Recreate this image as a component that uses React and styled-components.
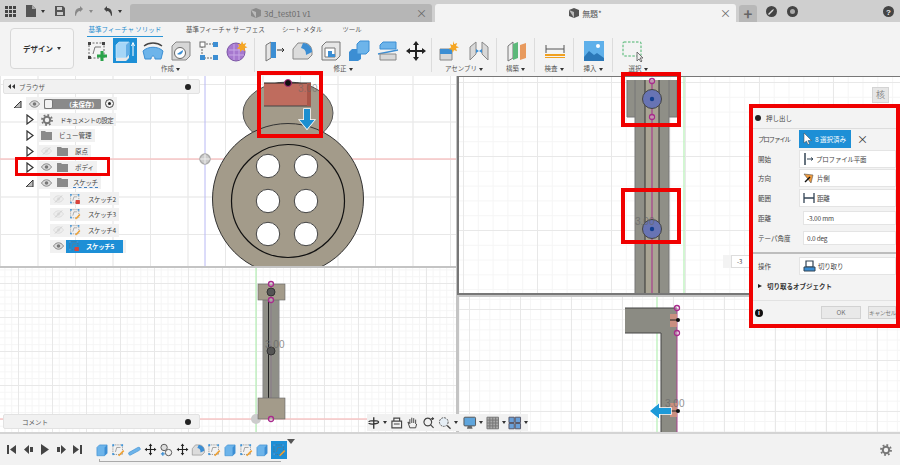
import React from 'react'
import styled, { createGlobalStyle, css } from 'styled-components'

const GlobalStyle = createGlobalStyle`
  html, body { margin: 0; padding: 0; background: #f2f2f2; }
  body { font-family: "Noto Sans CJK JP", "Noto Sans", sans-serif; color: #444; overflow: hidden; }
  * { box-sizing: border-box; }
`

const Page = styled.div`
  position: relative;
  width: 900px;
  height: 465px;
  overflow: hidden;
  display: flex;
  flex-direction: column;
`

/* ---------- tab bar ---------- */
const TabBar = styled.div`
  height: 22px;
  background: #cfcfcf;
  display: flex;
  align-items: flex-end;
`
const QuickTools = styled.div`
  width: 130px;
  height: 22px;
  display: flex;
  align-items: center;
  padding-left: 5px;
  gap: 3px;
  flex: none;
`
const Tab = styled.div`
  position: relative;
  width: ${(p) => p.$w}px;
  margin-right: 3px;
  height: 18px;
  border-radius: 3px 3px 0 0;
  background: ${(p) => (p.$active ? '#f3f3f3' : '#b6b6b6')};
  color: ${(p) => (p.$active ? '#555' : '#6c6c6c')};
  font-size: 8px;
  display: flex;
  align-items: center;
  justify-content: center;
  gap: 3px;
  flex: none;
`
const TabClose = styled.span`
  position: absolute;
  right: 5px;
  top: 3px;
  font-size: 11px;
  line-height: 12px;
  color: #666;
`
const PlusTab = styled.div`
  width: 18px;
  height: 17px;
  border-radius: 3px 3px 0 0;
  background: #b8b8b8;
  color: #666;
  font-size: 15px;
  line-height: 17px;
  text-align: center;
  font-weight: 700;
  flex: none;
`
const TabRight = styled.div`
  flex: 1;
  height: 22px;
  display: flex;
  align-items: center;
  padding: 0 6px 0 9px;
  gap: 10px;
`
const Spacer = styled.div`
  flex: 1;
`

/* ---------- ribbon ---------- */
const Ribbon = styled.div`
  height: 54px;
  background: #f3f3f3;
  display: flex;
  padding-left: 10px;
`
const DesignButton = styled.div`
  width: 64px;
  height: 41px;
  margin-top: 6px;
  margin-right: 13px;
  border: 1px solid #d8d8d8;
  border-radius: 4px;
  background: #f6f6f6;
  font-size: 7.5px;
  font-weight: 700;
  color: #333;
  display: flex;
  align-items: center;
  justify-content: center;
  flex: none;
`
const RibbonBody = styled.div`
  position: relative;
  flex: 1;
  display: flex;
  padding-top: 15px;
`
const RibbonTab = styled.div`
  position: absolute;
  top: 2px;
  left: ${(p) => p.$x}px;
  width: ${(p) => p.$w}px;
  height: 13px;
  text-align: center;
  font-size: 6.5px;
  line-height: 11px;
  white-space: nowrap;
  color: ${(p) => (p.$active ? '#2a8fd0' : '#555')};
  border-bottom: ${(p) => (p.$active ? '1px solid #2a94d6' : 'none')};
`
const Group = styled.div`
  display: flex;
  flex-direction: column;
  align-items: center;
  width: ${(p) => p.$w}px;
  height: 34px;
  margin-top: 1px;
  border-right: ${(p) => (p.$last ? 'none' : '1px solid #dcdcdc')};
  flex: none;
`
const IconRow = styled.div`
  display: flex;
  gap: ${(p) => p.$gap ?? 6}px;
  height: 26px;
  align-items: center;
  transform: translateX(${(p) => p.$shift ?? 0}px);
`
const IconCell = styled.div`
  width: 24px;
  height: 25px;
  display: flex;
  align-items: center;
  justify-content: center;
  background: ${(p) => (p.$on ? '#1d8fd6' : 'transparent')};
  flex: none;
`
const GroupLabel = styled.div`
  font-size: 6.5px;
  line-height: 11px;
  color: #555;
  white-space: nowrap;
`

/* ---------- viewports ---------- */
const Views = styled.div`
  position: relative;
  height: 356px;
  display: flex;
  background: #fff;
`
const Column = styled.div`
  display: flex;
  flex-direction: column;
  width: ${(p) => p.$w}px;
  flex: none;
`
const gridLines = (p) => css`
  background-color: #fff;
  background-image:
    linear-gradient(#e8e8e8 1px, transparent 1px),
    linear-gradient(90deg, #e8e8e8 1px, transparent 1px),
    linear-gradient(#f5f5f5 1px, transparent 1px),
    linear-gradient(90deg, #f5f5f5 1px, transparent 1px);
  background-size:
    ${p.$major}px ${p.$major}px,
    ${p.$major}px ${p.$major}px,
    ${p.$minor}px ${p.$minor}px,
    ${p.$minor}px ${p.$minor}px;
  background-position: ${p.$ox}px ${p.$oy}px;
`
const Pane = styled.div`
  ${gridLines}
  height: ${(p) => p.$h}px;
  border-top: ${(p) => (p.$bt ? `${p.$btw ?? 1}px solid ${p.$bt}` : 'none')};
  border-left: ${(p) => (p.$bl ? `2px solid ${p.$bl}` : 'none')};
  border-bottom: ${(p) => (p.$bb ? `2px solid ${p.$bb}` : 'none')};
  overflow: hidden;
  flex: none;
`
const Drawing = styled.svg`
  display: block;
  width: 100%;
  height: 100%;
`
const DimText = styled.text`
  font-family: "Liberation Sans", sans-serif;
  font-size: 10px;
  fill: #666;
  opacity: ${(p) => p.$fade ?? 1};
`
const Splitter = styled.div`
  width: 1px;
  background: #c4c4c4;
  flex: none;
`

/* ---------- browser / comments ---------- */
const PanelHeader = styled.div`
  position: absolute;
  left: 3px;
  top: ${(p) => p.$y}px;
  width: 197px;
  height: 15px;
  background: #f1f1f1;
  border: 1px solid #e2e2e2;
  border-radius: 2px;
  display: flex;
  align-items: center;
  padding: 0 8px 0 4px;
  font-size: 6.5px;
  color: #555;
  gap: 4px;
`
const PanelDot = styled.span`
  margin-left: auto;
  width: 6px;
  height: 6px;
  border-radius: 50%;
  background: #222;
`
const Tree = styled.div`
  position: absolute;
  left: 0;
  top: 20px;
  width: 200px;
  display: flex;
  flex-direction: column;
  font-size: 6.5px;
  color: #444;
`
const TreeRow = styled.div`
  height: 15.8px;
  display: flex;
  align-items: center;
  padding-left: ${(p) => p.$indent}px;
`
const Toggle = styled.div`
  width: 12px;
  height: 12px;
  display: flex;
  align-items: center;
  justify-content: flex-start;
  flex: none;
`
const Pill = styled.div`
  height: 13px;
  display: flex;
  align-items: center;
  background: #f1f1f1;
  padding: 0 3px;
  gap: ${(p) => p.$gap ?? 3}px;
  margin-left: ${(p) => p.$ml ?? 0}px;
`
const Name = styled.span`
  margin-left: ${(p) => p.$ml ?? 0}px;
  white-space: nowrap;
  letter-spacing: ${(p) => p.$ls ?? 0}px;
  border-bottom: ${(p) => (p.$dashed ? '1px dashed #3f7fc4' : 'none')};
`
const RootChip = styled.div`
  width: 57px;
  height: 10px;
  background: #8a8a8a;
  color: #fff;
  font-size: 6.5px;
  font-weight: 700;
  line-height: 10px;
  display: flex;
  align-items: center;
  justify-content: space-between;
  padding-right: 3px;
  border-radius: 1px;
`
const RootThumb = styled.span`
  width: 9px;
  height: 10px;
  background: #f2f2f2;
  border: 1px solid #777;
  border-radius: 2px;
`
const Selected = styled.div`
  width: 57px;
  height: 13px;
  background: #1d8fd6;
  color: #fff;
  font-weight: 700;
  display: flex;
  align-items: center;
  padding-left: 2px;
  gap: 6px;
  margin-left: -1px;
`

/* ---------- nav bar ---------- */
const NavBar = styled.div`
  position: absolute;
  left: 367px;
  top: 338px;
  width: 161px;
  height: 17px;
  background: #f1f1f1;
  display: flex;
  align-items: center;
  gap: 2.5px;
`
const Caret = styled.span`
  width: 0;
  height: 0;
  border-left: 2px solid transparent;
  border-right: 2px solid transparent;
  border-top: 3px solid ${(p) => p.$c ?? '#333'};
  display: inline-block;
  margin-left: ${(p) => p.$ml ?? 2}px;
  margin-right: ${(p) => p.$mr ?? 0}px;
  vertical-align: middle;
  flex: none;
`

/* ---------- red callouts ---------- */
const Callout = styled.div`
  position: absolute;
  left: ${(p) => p.$x}px;
  top: ${(p) => p.$y}px;
  width: ${(p) => p.$w}px;
  height: ${(p) => p.$h}px;
  border: ${(p) => p.$b ?? 4}px solid #f00000;
  pointer-events: none;
`
const ViewCube = styled.div`
  position: absolute;
  left: 872px;
  top: 11px;
  width: 17px;
  height: 16px;
  background: #e6e6e6;
  border: 1px solid #d4d4d4;
  font-size: 9px;
  color: #888;
  text-align: center;
  line-height: 14px;
`
const GhostInput = styled.div`
  position: absolute;
  left: 723px;
  top: 179px;
  width: 30px;
  height: 13px;
  background: #f3f3f3;
  padding-left: 8px;
`
const GhostField = styled.div`
  width: 22px;
  height: 13px;
  background: #fff;
  border: 1px solid #ddd;
  font-size: 6px;
  line-height: 11px;
  padding-left: 5px;
`

/* ---------- extrude dialog ---------- */
const Dialog = styled.div`
  position: absolute;
  left: 753px;
  top: 32px;
  width: 143px;
  height: 216px;
  background: #f3f3f3;
  font-size: 6.5px;
  color: #444;
  overflow: hidden;
  display: flex;
  flex-direction: column;
`
const DialogTitle = styled.div`
  height: 21px;
  padding-left: 2px;
  display: flex;
  align-items: center;
  gap: 5px;
  border-bottom: 1px solid #ddd;
`
const TitleDot = styled.span`
  width: 6px;
  height: 6px;
  border-radius: 50%;
  background: #222;
`
const DialogRow = styled.div`
  height: 19.8px;
  display: flex;
  align-items: center;
  padding-left: 5px;
  flex: none;
`
const DialogLabel = styled.div`
  width: 41px;
  flex: none;
  white-space: nowrap;
  letter-spacing: ${(p) => p.$ls ?? 0}px;
`
const ProfileButton = styled.div`
  width: 52px;
  height: 18px;
  background: #1d8fd6;
  color: #fff;
  display: flex;
  align-items: center;
  padding-left: 4px;
  gap: 3px;
`
const ClearX = styled.span`
  margin-left: 6px;
  font-size: 11px;
  color: #333;
`
const Field = styled.div`
  width: 110px;
  height: ${(p) => (p.$plain ? 14 : 18)}px;
  margin-left: ${(p) => (p.$plain ? 4 : 0)}px;
  background: #fff;
  border: 1px solid #e4e4e4;
  display: flex;
  align-items: center;
  padding-left: 3px;
  gap: 2px;
  white-space: nowrap;
  letter-spacing: -0.2px;
`
const DialogRule = styled.div`
  height: 2px;
  background: #bdbdbd;
  margin: 4px 0 2px;
  flex: none;
`
const Section = styled.div`
  height: 20px;
  padding-left: 5px;
  display: flex;
  align-items: center;
  gap: 5px;
  font-weight: 700;
  color: #333;
`
const SectionArrow = styled.span`
  width: 0;
  height: 0;
  border-top: 2.5px solid transparent;
  border-bottom: 2.5px solid transparent;
  border-left: 4px solid #222;
`
const DialogFooter = styled.div`
  margin-top: auto;
  height: 24px;
  border-top: 1px solid #e2e2e2;
  display: flex;
  align-items: center;
  padding-left: 2px;
`
const InfoDot = styled.span`
  width: 8px;
  height: 8px;
  border-radius: 50%;
  background: #111;
  color: #fff;
  font-size: 6px;
  line-height: 8px;
  text-align: center;
  font-weight: 700;
  margin-right: 58px;
  flex: none;
`
const FootButton = styled.div`
  width: ${(p) => p.$w}px;
  height: 13px;
  background: #e9e9e9;
  border: 1px solid #d2d2d2;
  color: #777;
  font-size: ${(p) => p.$fs ?? 6.5}px;
  letter-spacing: ${(p) => p.$ls ?? 0}px;
  text-align: center;
  line-height: 11px;
  margin-right: 7px;
  white-space: nowrap;
  flex: none;
`

/* ---------- timeline ---------- */
const Timeline = styled.div`
  height: 33px;
  background: #f2f2f2;
  border-top: 2px solid #d4d4d4;
  display: flex;
  align-items: center;
  padding-left: 6px;
  padding-right: 8px;
`
const Player = styled.div`
  display: flex;
  gap: 5.5px;
  width: 89px;
  flex: none;
`
const Steps = styled.div`
  position: relative;
  display: flex;
  gap: 2px;
  height: 24px;
  align-items: center;
`
const Step = styled.div`
  width: 14px;
  height: 16px;
  display: flex;
  align-items: center;
  justify-content: center;
  flex: none;
`
const ActiveStep = styled.div`
  width: 16px;
  height: 18px;
  background: #1d8fd6;
  display: flex;
  align-items: center;
  justify-content: center;
  flex: none;
`
const Ruler = styled.div`
  position: absolute;
  left: 4px;
  right: 6px;
  bottom: 0;
  height: 3px;
  border-bottom: 1px solid #aaa;
  border-left: 1px solid #aaa;
`
const Marker = styled.div`
  position: absolute;
  right: -8px;
  top: 1px;
  width: 0;
  height: 0;
  border-left: 4px solid transparent;
  border-right: 4px solid transparent;
  border-top: 5px solid #555;
`

/* ---------- icons ---------- */
const Svg = ({ s = 22, children }) => (
  <svg width={s} height={s} viewBox="0 0 22 22" fill="none">
    {children}
  </svg>
)
const B = '#6db4ea'
const D = '#3c8ed3'

const Cube = ({ s = 22 }) => (
  <Svg s={s}>
    <path d="M3 7l4-4h12v13l-4 4H3z" fill={B} stroke={D} />
    <path d="M15 7l4-4v13l-4 4z" fill={D} />
  </Svg>
)
const ExtrudeIcon = () => (
  <Svg>
    <path d="M2 5l3-3h10v13l-3 3H2z" fill="#a6d6f7" stroke="#d8eefc" strokeWidth=".6" />
    <path d="M12 5l3-3v13l-3 3z" fill="#63aee6" />
    <path d="M2 18h10l3-3v3l-3 3H2z" fill="#e8e8e8" />
    <path d="M19 16V3M17.500 6L19 2.500 20.500 6" stroke="#fff" />
  </Svg>
)
const SketchIcon = ({ s = 22, plus, pen, lock }) => (
  <Svg s={s}>
    <rect x="3" y="3" width="15" height="15" stroke="#666" strokeDasharray="2 1.500" />
    <path d="M9 7h6M7 14l2-7" stroke="#777" />
    {[[2, 2], [16, 2], [2, 16]].map(([x, y]) => (
      <rect key={`${x}${y}`} x={x} y={y} width="3" height="3" fill={plus ? '#444' : '#3f96dc'} />
    ))}
    {plus && <path d="M16 11v10M11 16h10" stroke="#2aa34a" strokeWidth="3" />}
    {pen && <path d="M12 20l8-8" stroke="#f0a030" strokeWidth="2.500" />}
    {lock && <rect x="12" y="13" width="8" height="7" rx="1" fill="#d9453c" />}
  </Svg>
)
const RevolveIcon = ({ s = 22 }) => (
  <Svg s={s}>
    <path d="M1 11c5-5 15-5 20 0l-2 8h-6c0-4-4-4-4 0H3z" fill={B} stroke={D} />
    <path d="M2 6c5-4 13-4 18 0" stroke="#444" strokeWidth="1.300" />
  </Svg>
)
const PipeIcon = ({ s = 22 }) => (
  <Svg s={s}>
    <path d="M3 15L17 7a2.500 2.500 0 0 1 2.500 4.500L5.500 19A2.500 2.500 0 0 1 3 15z" fill={B} stroke={D} />
  </Svg>
)
const HoleIcon = () => (
  <Svg>
    <path d="M2 6l4-4h14v14l-4 4H2z" fill="#d6d6d6" stroke="#888" />
    <circle cx="10" cy="13" r="5.500" fill="#fff" stroke="#666" />
    <path d="M7 14l6-4a4 4 0 0 1-6 4z" fill={D} />
  </Svg>
)
const PatternIcon = () => (
  <Svg>
    <path d="M5 4h12M4 6v11M6 18h11" stroke="#666" strokeDasharray="2 1" />
    {[[2, 2], [15, 2], [2, 15], [15, 15]].map(([x, y], i) => (
      <rect key={x + y + i} x={x} y={y} width="5" height="5" fill={i === 0 ? '#fff' : D} stroke={i === 0 ? '#666' : 'none'} />
    ))}
  </Svg>
)
const JointStep = ({ s = 22 }) => (
  <Svg s={s}>
    <circle cx="8" cy="7" r="5" fill="#ddd" stroke="#555" strokeWidth="1.500" />
    <circle cx="15" cy="15" r="5" fill="#f2f2f2" stroke="#555" strokeWidth="1.500" />
    <path d="M6 14v6M3 17h6" stroke={D} strokeWidth="2" />
  </Svg>
)
const FormIcon = () => (
  <Svg>
    <circle cx="10" cy="12" r="9" fill="#a678cf" stroke="#7d57a6" />
    <path d="M3 10h15M3 15h15M8 4v16M13 4v16" stroke="#c8a8e6" />
    <path d="M16 1l1.300 3 3-1-1.500 3 2.700 1.300-3 1 .8 3-3-1.600-2 2.300-.5-3-3-.4 2.500-2-1.500-2.600 3 .6z" fill="#f5a623" />
  </Svg>
)
const PressPullIcon = () => (
  <Svg>
    <path d="M3 5l5-3v16l-5 3z" fill="#e5e5e5" stroke="#777" />
    <path d="M8 2h5v16H8z" fill={D} />
    <path d="M14 10h7M19 8l2 2-2 2" stroke="#333" />
  </Svg>
)
const FilletIcon = ({ s = 22 }) => (
  <Svg s={s}>
    <path d="M2 19V9l5-6h6c5 0 8 4 8 9v3l-4 4z" fill="#dcdcdc" stroke="#888" />
    <path d="M12 3c5 0 9 4 9 9l-6 3c0-4-1-6-5-7z" fill={D} />
  </Svg>
)
const ShellIcon = () => (
  <Svg>
    <path d="M2 6l4-4h14v14l-4 4H2z" fill="#e6e6e6" stroke="#777" />
    <path d="M5 8h10v9H5z" fill="#fff" stroke="#777" />
    <path d="M8 11h4v3h3v3H8z" fill={D} />
  </Svg>
)
const CombineIcon = () => (
  <Svg>
    <path d="M1 12l3-3h9v10l-3 2H1z" fill={D} />
    <path d="M9 4l3-3h9v10l-3 3H9z" fill={B} stroke={D} />
  </Svg>
)
const SplitIcon = () => (
  <Svg>
    <path d="M3 5l3-3h13v7H3z" fill={B} stroke={D} />
    <path d="M1 14l20-4" stroke={D} strokeWidth="1.500" />
    <path d="M3 14h16v6H3z" fill="#d8d8d8" stroke="#888" />
  </Svg>
)
const MoveIcon = ({ s = 22 }) => (
  <Svg s={s}>
    <path d="M11 1l3 4h-2v5h5V8l4 3-4 3v-2h-5v5h2l-3 4-3-4h2v-5H5v2l-4-3 4-3v2h5V5H8z" fill="#222" />
  </Svg>
)
const AssemblyIcon = () => (
  <Svg>
    <path d="M2 9h12v11H2z" fill="#d8d8d8" stroke="#888" />
    <path d="M2 9h12v5H2z" fill={D} />
    <path d="M15 1l1.200 3 3-1-1.200 3 3 1.200-3 1 1 3-3-1.200-1.300 2.800-1-3-3-.8 2.500-1.800-1.200-3 3 .8z" fill="#f5a623" />
  </Svg>
)
const JointIcon = () => (
  <Svg>
    <path d="M2 7l6-5v12l-6 6zM20 7l-6-5v12l6 6z" fill="#d8d8d8" stroke="#888" />
    <path d="M8 9l3 2-3 2zM14 9l-3 2 3 2z" fill={D} />
  </Svg>
)
const PlaneIcon = () => (
  <Svg>
    <path d="M2 6l5-4v16l-5 3z" fill="#eee" stroke="#777" />
    <path d="M7 4l5-2v16l-5 2z" fill="#5cb87a" />
    <path d="M14 5l6-2v15l-6 2z" fill="#e89a5e" />
  </Svg>
)
const MeasureIcon = () => (
  <Svg>
    <path d="M2 5v8M20 5v8M2 9h18" stroke="#555" />
    <rect x="1" y="14" width="20" height="2" fill="#f0a020" />
    <rect x="1" y="17" width="20" height="1" fill="#f0a020" />
  </Svg>
)
const PictureIcon = () => (
  <Svg>
    <rect x="1" y="1" width="20" height="20" fill="#5fb0ea" />
    <circle cx="15" cy="6" r="2" fill="#fff" />
    <path d="M1 17l5-6 5 4 3-2 7 5v3H1z" fill="#2b78b8" />
  </Svg>
)
const SelectIcon = () => (
  <Svg>
    <rect x="1" y="2" width="18" height="14" rx="1" stroke="#47b36b" strokeDasharray="2.500 1.500" />
    <path d="M15 12v9l2-2 2 3 1-1-2-3h3z" fill="#eee" stroke="#555" strokeWidth=".8" />
  </Svg>
)
const Grid9 = () => (
  <svg width="11" height="11" viewBox="0 0 11 11">
    {[0, 4, 8].flatMap((x) =>
      [0, 4, 8].map((y) => <rect key={`${x}-${y}`} x={x} y={y} width="3" height="3" fill="#444" />)
    )}
  </svg>
)
const FileIcon = () => (
  <svg width="10" height="12" viewBox="0 0 10 12">
    <path d="M0 0h6l4 4v8H0z" fill="#555" />
    <path d="M6 0v4h4" fill="#aaa" />
  </svg>
)
const SaveIcon = () => (
  <svg width="10" height="10" viewBox="0 0 10 10">
    <path d="M0 0h8l2 2v8H0z" fill="#555" />
    <rect x="2" y="1" width="5" height="3" fill="#ccc" />
    <rect x="2" y="6" width="6" height="3" fill="#ccc" />
  </svg>
)
const Turn = ({ flip, c }) => (
  <svg width="10" height="10" viewBox="0 0 10 10" fill="none" style={flip ? { transform: 'scaleX(-1)' } : undefined}>
    <path d="M1 3l3-3v2c3 0 5 2 5 6 0 1 0 2-1 2 0-3-2-5-4-5v1z" fill={c} />
  </svg>
)
const MiniCube = ({ c = '#555' }) => (
  <svg width="10" height="10" viewBox="0 0 10 10">
    <path d="M5 0l5 2v6l-5 2-5-2V2z" fill={c} />
    <path d="M0 2l5 2v6" fill="#bbb" />
  </svg>
)
const RoundIcon = ({ ch }) => (
  <svg width="11" height="11" viewBox="0 0 11 11">
    <circle cx="5.500" cy="5.500" r="5.500" fill="#444" />
    {ch === 'clock' && <circle cx="5.500" cy="5.500" r="2.500" fill="#aaa" />}
    {ch === 'wrench' && <path d="M2 8l4-4 2-1-1 2-4 4z" fill="#ddd" />}
    {ch === '?' && <text x="5.500" y="8.500" fontSize="8" fontWeight="700" textAnchor="middle" fill="#eee" fontFamily="Liberation Sans, sans-serif">?</text>}
  </svg>
)
const Eye = ({ off }) => (
  <svg width="11" height="8" viewBox="0 0 11 8" fill="none">
    <path d="M.5 4C2 1.500 4 .8 5.500.8S9 1.500 10.500 4C9 6.500 7 7.200 5.500 7.200S2 6.500.5 4z" fill={off ? '#eee' : '#ddd'} stroke={off ? '#ddd' : '#888'} />
    <circle cx="5.500" cy="4" r="1.800" fill={off ? '#ddd' : '#777'} />
    {off && <path d="M2 7.500l7-7" stroke="#ccc" />}
  </svg>
)
const Folder = () => (
  <svg width="11" height="9" viewBox="0 0 11 9">
    <path d="M0 0h4l1 1h6v8H0z" fill="#8a8a8a" />
  </svg>
)
const Gear = () => (
  <svg width="12" height="12" viewBox="0 0 12 12" fill="none">
    <circle cx="6" cy="6" r="3.200" stroke="#777" strokeWidth="2" />
    <circle cx="6" cy="6" r="5" stroke="#777" strokeWidth="1.800" strokeDasharray="1.800 2.100" />
  </svg>
)
const TriOpen = () => (
  <svg width="8" height="8" viewBox="0 0 8 8">
    <path d="M0 8L7 1v7z" fill="#bbb" stroke="#333" strokeWidth="1" />
  </svg>
)
const TriClosed = () => (
  <svg width="8" height="11" viewBox="0 0 8 11">
    <path d="M1 1l6 4.500L1 10z" fill="#fff" stroke="#333" strokeWidth="1.200" />
  </svg>
)
const Radio = () => (
  <svg width="9" height="9" viewBox="0 0 9 9" fill="none">
    <circle cx="4.500" cy="4.500" r="4" stroke="#444" />
    <circle cx="4.500" cy="4.500" r="1.500" fill="#222" />
  </svg>
)
const Collapse = () => (
  <svg width="7" height="5" viewBox="0 0 7 5">
    <path d="M3 0v5L0 2.500zM7 0v5L4 2.500z" fill="#333" />
  </svg>
)
const Transport = ({ d }) => (
  <svg width="11" height="11" viewBox="0 0 11 11">
    <path d={d} fill="#444" />
  </svg>
)
const NavIcon = ({ kind }) => (
  <svg width="14" height="14" viewBox="0 0 14 14" fill="none">
    {kind === 'orbit' && <path d="M7 1v12M2 6c0-2 10-2 10 0s-10 3-10 1" stroke="#333" strokeWidth="1.400" />}
    {kind === 'look' && <path d="M2 5h10v7H2zM4 5V2h6v3M4 8h6" stroke="#444" strokeWidth="1.200" />}
    {kind === 'hand' && <path d="M4 8V3m2 4V1.500M8 7V2m2 6V3.500M4 7L2 6l2 6h6l1-4" stroke="#444" />}
    {kind === 'zoom' && <path d="M8.500 8.500L12 12M6 2a4 4 0 1 0 .01 0zM11 1v3M9.500 2.500h3" stroke="#444" strokeWidth="1.200" />}
    {kind === 'fit' && (
      <>
        <circle cx="6" cy="6" r="4.500" stroke="#555" strokeDasharray="2 1" fill="#e6eef5" />
        <path d="M9.500 9.500L13 13" stroke="#444" strokeWidth="1.400" />
      </>
    )}
    {kind === 'display' && (
      <>
        <rect x="1" y="1" width="12" height="9" rx="1" fill="#5fa5dc" stroke="#555" />
        <path d="M4 13h6L9 10H5z" fill="#666" />
      </>
    )}
    {kind === 'grid' && <path d="M1 1h12v12H1zM1 4h12M1 7h12M1 10h12M4 1v12M7 1v12M10 1v12" stroke="#777" fill="#aaa" />}
    {kind === 'views' && <path d="M1 1h5.500v5.500H1zM7.500 1H13v5.500H7.500zM1 7.500h5.500V13H1zM7.500 7.500H13V13H7.500z" fill="#6a9fd8" stroke="#556" />}
  </svg>
)
const DirIcon = () => (
  <svg width="12" height="12" viewBox="0 0 12 12">
    <path d="M1 2l9 1-2 8z" fill="#ef9a3c" stroke="#555" strokeWidth=".6" />
    <path d="M7 5l-5 5" stroke="#111" strokeWidth="1.500" />
  </svg>
)
const StartIcon = () => (
  <svg width="11" height="12" viewBox="0 0 11 12" fill="none">
    <path d="M2 0v12" stroke="#345" strokeWidth="1.500" />
    <path d="M4 6h6M8 4.500L10 6 8 7.500" stroke="#345" />
  </svg>
)
const ExtentIcon = () => (
  <svg width="12" height="12" viewBox="0 0 12 12" fill="none">
    <path d="M1 1v10M11 1v10M1 6h10" stroke="#345" strokeWidth="1.300" />
  </svg>
)
const CutIcon = () => (
  <svg width="13" height="12" viewBox="0 0 13 12" fill="none">
    <path d="M3 1h7v6H3z" fill="#fff" stroke="#345" strokeWidth="1.200" />
    <path d="M1 7h11v4H1z" fill="#3c8ed3" stroke="#345" />
  </svg>
)
const Pointer = ({ c = '#fff' }) => (
  <svg width="9" height="12" viewBox="0 0 9 12">
    <path d="M1 0v10l2.500-2 1.500 3.500 1.500-.7L5 7.500h3.500z" fill={c} stroke="#444" strokeWidth=".5" />
  </svg>
)

/* ---------- model drawings, coordinates are page pixels ---------- */
const Ring = ({ x, y }) => <circle cx={x} cy={y} r="2.500" fill="#fff" fillOpacity=".3" stroke="#a82a8c" strokeWidth="1.300" />

const TopLeftModel = () => (
  <Drawing viewBox="0 76 456 190" preserveAspectRatio="none">
    <path d="M0 159H456" stroke="#f7c6c6" strokeWidth="1.500" />
    <path d="M205 76V266" stroke="#b8b8f4" />
    <circle cx="205" cy="159" r="5" fill="#ccc" stroke="#aaa" strokeWidth="1.500" />
    <path d="M205 154v10M200 159h10" stroke="#eee" />
    <ellipse cx="288" cy="113" rx="45" ry="31" fill="#a39b8a" stroke="#555" />
    <circle cx="288" cy="199" r="75.500" fill="#a39b8a" stroke="#333" />
    <circle cx="288" cy="201" r="56.500" fill="none" stroke="#111" strokeWidth="1.200" />
    {[268, 306].flatMap((x) =>
      [166, 201, 234].map((y) => <circle key={`${x}-${y}`} cx={x} cy={y} r="11.700" fill="#fff" stroke="#444" />)
    )}
    <rect x="264" y="83" width="47" height="23" fill="#bf6c5e" />
    <path d="M264 83h47" stroke="#222" />
    <path d="M264 106h47" stroke="#444" />
    <rect x="307" y="83" width="4" height="23" fill="#a95548" />
    <circle cx="288" cy="83" r="3.500" fill="#111" stroke="#b02a7a" />
    <DimText x="298" y="92" $fade=".55">3.00</DimText>
    <path d="M304 109h6v11h4.500l-7.500 9-7.500-9h4.500z" fill="#1c8fd0" stroke="#fff" strokeWidth="1.500" paintOrder="stroke" />
  </Drawing>
)
const TopRightModel = () => (
  <Drawing viewBox="459 77 441 216" preserveAspectRatio="none">
    <path d="M684 77V295" stroke="#b5f0b5" strokeWidth="1.200" />
    <rect x="627" y="80" width="50" height="37" fill="#8f8f87" />
    <rect x="635" y="117" width="34" height="178" fill="#8f8f87" />
    <rect x="645" y="80" width="14" height="215" fill="#a9a493" />
    <path d="M635 80v215M669 80v215M627 80v37M677 80v37M627 117h8M669 117h8" stroke="#777" />
    <path d="M645 80v215M659 80v215" stroke="#333" />
    <path d="M652 80v215" stroke="#a8408e" strokeWidth="1.200" />
    {[99, 229].map((y) => (
      <g key={y}>
        <circle cx="652" cy={y} r="9.500" fill="#6874b4" stroke="#444" />
        <circle cx="652" cy={y} r="2.200" fill="#123f90" />
      </g>
    ))}
    <Ring x={652} y={81} />
    <Ring x={652} y={117} />
    <DimText x="635" y="225" $fade=".7">3.00</DimText>
  </Drawing>
)
const BottomLeftModel = () => (
  <Drawing viewBox="0 268 456 164" preserveAspectRatio="none">
    <path d="M0 419H456" stroke="#f7c6c6" strokeWidth="1.500" />
    <path d="M256 268V432" stroke="#b5f0b5" strokeWidth="1.200" />
    <circle cx="256" cy="419" r="5" fill="#ccc" />
    <rect x="263" y="298" width="16" height="100" fill="#8f8f87" />
    <path d="M263 298v100M279 298v100" stroke="#888" />
    <path d="M268.500 298v100" stroke="#222" />
    <path d="M271 284v135" stroke="#8a7a8a" />
    <rect x="258" y="284" width="27" height="16" fill="#a39b8a" stroke="#666" strokeWidth=".6" />
    <rect x="258" y="398" width="27" height="21" fill="#a39b8a" stroke="#666" strokeWidth=".6" />
    <circle cx="271" cy="292" r="4" fill="#555" stroke="#333" />
    <circle cx="271" cy="351" r="4" fill="#555" stroke="#333" />
    <Ring x={271} y={284} />
    <Ring x={271} y={300} />
    <Ring x={271} y={419} />
    <DimText x="265" y="348" $fade=".7">3.00</DimText>
  </Drawing>
)
const BottomRightModel = () => (
  <Drawing viewBox="459 297 441 135" preserveAspectRatio="none">
    <path d="M657 297V432" stroke="#b5f0b5" strokeWidth="1.200" />
    <rect x="625" y="308" width="52" height="25" fill="#8b8b83" />
    <rect x="661" y="333" width="16" height="99" fill="#8b8b83" />
    <path d="M625 308h52M625 333h36M661 333v99" stroke="#444" />
    <path d="M677 308v124" stroke="#a8408e" />
    <rect x="670" y="314" width="7" height="13" fill="#c98f80" />
    <rect x="670" y="403" width="7" height="14" fill="#c98f80" />
    <path d="M670 320h8M670 411h8" stroke="#222" />
    <circle cx="678" cy="320" r="2" fill="#111" />
    <circle cx="678" cy="411" r="2" fill="#111" />
    <Ring x={677} y={308} />
    <Ring x={677} y={333} />
    <path d="M671 408h-12v-4.500l-9 7.500 9 7.500V414h12z" fill="#1c9ad8" stroke="#fff" strokeWidth="1.500" paintOrder="stroke" />
    <DimText x="665" y="407" $fade=".7">3.00</DimText>
  </Drawing>
)

const plainRows = [
  { name: 'ドキュメントの設定', lead: <Gear />, ls: -0.6 },
  { name: 'ビュー管理', lead: <Folder /> },
]
const bodyRows = [
  { name: '原点', off: true },
  { name: 'ボディ' },
]
const sketchRows = [
  { name: 'スケッチ2', lock: true },
  { name: 'スケッチ3', pen: true },
  { name: 'スケッチ4', pen: true },
]
const stepIcons = [
  <Cube s={14} key="a" />,
  <SketchIcon s={14} pen key="b" />,
  <PipeIcon s={14} key="c" />,
  <MoveIcon s={13} key="d" />,
  <JointStep s={14} key="e" />,
  <MoveIcon s={13} key="f" />,
  <FilletIcon s={14} key="g" />,
  <SketchIcon s={14} pen key="h" />,
  <Cube s={14} key="i" />,
  <SketchIcon s={14} pen key="j" />,
  <Cube s={14} key="k" />,
]

export default function App() {
  return (
    <Page>
      <GlobalStyle />
      <TabBar>
        <QuickTools>
          <Grid9 />
          <Spacer />
          <FileIcon /><Caret />
          <Spacer />
          <SaveIcon />
          <Spacer />
          <Turn flip c="#888" /><Caret $c="#888" />
          <Spacer />
          <Turn c="#444" /><Caret $mr={8} />
        </QuickTools>
        <Tab $w={302}>
          <MiniCube c="#8a8a8a" />3d_test01 v1
          <TabClose>×</TabClose>
        </Tab>
        <Tab $active $w={301}>
          <MiniCube />無題*
          <TabClose>×</TabClose>
        </Tab>
        <PlusTab>+</PlusTab>
        <TabRight>
          <RoundIcon ch="wrench" />
          <RoundIcon ch="clock" />
          <Spacer />
          <RoundIcon ch="?" />
        </TabRight>
      </TabBar>

      <Ribbon>
        <DesignButton>デザイン<Caret $ml={4} /></DesignButton>
        <RibbonBody>
          <RibbonTab $active $x={0} $w={76}>基準フィーチャ ソリッド</RibbonTab>
          <RibbonTab $x={99} $w={70}>基準フィーチャ サーフェス</RibbonTab>
          <RibbonTab $x={195} $w={40}>シート メタル</RibbonTab>
          <RibbonTab $x={253} $w={24}>ツール</RibbonTab>
          <Group $w={168}>
            <IconRow $gap={4} $shift={-4}>
              <IconCell><SketchIcon plus /></IconCell>
              <IconCell $on><ExtrudeIcon /></IconCell>
              <IconCell><RevolveIcon /></IconCell>
              <IconCell><HoleIcon /></IconCell>
              <IconCell><PatternIcon /></IconCell>
              <IconCell><FormIcon /></IconCell>
            </IconRow>
            <GroupLabel>作成<Caret /></GroupLabel>
          </Group>
          <Group $w={177}>
            <IconRow $gap={4.4} $shift={2}>
              <IconCell><PressPullIcon /></IconCell>
              <IconCell><FilletIcon /></IconCell>
              <IconCell><ShellIcon /></IconCell>
              <IconCell><CombineIcon /></IconCell>
              <IconCell><SplitIcon /></IconCell>
              <IconCell><MoveIcon /></IconCell>
            </IconRow>
            <GroupLabel>修正<Caret /></GroupLabel>
          </Group>
          <Group $w={65}>
            <IconRow $gap={6}>
              <IconCell><AssemblyIcon /></IconCell>
              <IconCell><JointIcon /></IconCell>
            </IconRow>
            <GroupLabel>アセンブリ<Caret /></GroupLabel>
          </Group>
          <Group $w={38}>
            <IconRow $shift={1}><IconCell><PlaneIcon /></IconCell></IconRow>
            <GroupLabel>構築<Caret /></GroupLabel>
          </Group>
          <Group $w={39}>
            <IconRow $shift={1}><IconCell><MeasureIcon /></IconCell></IconRow>
            <GroupLabel>検査<Caret /></GroupLabel>
          </Group>
          <Group $w={39}>
            <IconRow $shift={1}><IconCell><PictureIcon /></IconCell></IconRow>
            <GroupLabel>挿入<Caret /></GroupLabel>
          </Group>
          <Group $w={50} $last>
            <IconRow $shift={-5}><IconCell><SelectIcon /></IconCell></IconRow>
            <GroupLabel>選択<Caret /></GroupLabel>
          </Group>
        </RibbonBody>
      </Ribbon>

      <Views>
        <Column $w={456}>
          <Pane $h={192} $bb="#c4c4c4" $major={37.5} $minor={37.5} $ox={0} $oy={8}>
            <TopLeftModel />
          </Pane>
          <Pane $h={164} $major={34} $minor={6.8} $ox={18} $oy={15}>
            <BottomLeftModel />
          </Pane>
        </Column>
        <Splitter />
        <Column $w={443}>
          <Pane $h={219} $bt="#777" $bl="#777" $bb="#777" $major={74} $minor={14.8} $ox={4} $oy={5}>
            <TopRightModel />
          </Pane>
          <Pane $h={137} $bt="#c4c4c4" $btw={2} $bl="#c4c4c4" $major={51} $minor={10.2} $ox={10} $oy={12}>
            <BottomRightModel />
          </Pane>
        </Column>

        <PanelHeader $y={3}>
          <Collapse />
          <span>ブラウザ</span>
          <PanelDot />
        </PanelHeader>
        <Tree>
          <TreeRow $indent={14}>
            <Toggle><TriOpen /></Toggle>
            <Pill $gap={4}>
              <Eye />
              <RootChip><RootThumb />（未保存）</RootChip>
              <Radio />
            </Pill>
          </TreeRow>
          {plainRows.map((row) => (
            <TreeRow $indent={26} key={row.name}>
              <Toggle><TriClosed /></Toggle>
              <Pill>{row.lead}<Name $ml={4} $ls={row.ls}>{row.name}</Name></Pill>
            </TreeRow>
          ))}
          {bodyRows.map((row) => (
            <TreeRow $indent={26} key={row.name}>
              <Toggle><TriClosed /></Toggle>
              <Pill $gap={5}><Eye off={row.off} /><Folder /><Name $ml={2}>{row.name}</Name></Pill>
            </TreeRow>
          ))}
          <TreeRow $indent={26}>
            <Toggle><TriOpen /></Toggle>
            <Pill $gap={5}><Eye /><Folder /><Name $dashed $ls={-0.3}>スケッチ</Name></Pill>
          </TreeRow>
          {sketchRows.map((row) => (
            <TreeRow $indent={50} key={row.name}>
              <Pill $gap={5}>
                <Eye off />
                <SketchIcon s={12} lock={row.lock} pen={row.pen} />
                <Name $ml={2} $ls={-0.4}>{row.name}</Name>
              </Pill>
            </TreeRow>
          ))}
          <TreeRow $indent={50}>
            <Pill>
              <Eye />
              <Selected><SketchIcon s={12} lock /><Name $ls={-0.4}>スケッチ5</Name></Selected>
            </Pill>
          </TreeRow>
        </Tree>

        <PanelHeader $y={338}>
          <Name $ml={14}>コメント</Name>
          <PanelDot />
        </PanelHeader>

        <NavBar>
          <NavIcon kind="orbit" /><Caret $ml={0} />
          <NavIcon kind="look" />
          <NavIcon kind="hand" />
          <NavIcon kind="zoom" />
          <NavIcon kind="fit" /><Caret $ml={0} $mr={3} />
          <NavIcon kind="display" /><Caret $ml={0} />
          <NavIcon kind="grid" /><Caret $ml={0} />
          <NavIcon kind="views" /><Caret $ml={0} />
        </NavBar>

        <ViewCube>核</ViewCube>
        <GhostInput><GhostField>-3</GhostField></GhostInput>

        <Callout $x={257} $y={-5} $w={66} $h={67} />
        <Callout $x={15} $y={81} $w={95} $h={19} $b={3} />
        <Callout $x={621} $y={-4} $w={60} $h={55} />
        <Callout $x={621} $y={112} $w={60} $h={56} />

        <Dialog>
          <DialogTitle><TitleDot />押し出し</DialogTitle>
          <DialogRow>
            <DialogLabel $ls={-1.2}>プロファイル</DialogLabel>
            <ProfileButton><Pointer />8 選択済み</ProfileButton>
            <ClearX>×</ClearX>
          </DialogRow>
          <DialogRow>
            <DialogLabel>開始</DialogLabel>
            <Field><StartIcon />プロファイル平面</Field>
          </DialogRow>
          <DialogRow>
            <DialogLabel>方向</DialogLabel>
            <Field><DirIcon />片側</Field>
          </DialogRow>
          <DialogRow>
            <DialogLabel>範囲</DialogLabel>
            <Field><ExtentIcon />距離</Field>
          </DialogRow>
          <DialogRow>
            <DialogLabel>距離</DialogLabel>
            <Field $plain>-3.00 mm</Field>
          </DialogRow>
          <DialogRow>
            <DialogLabel>テーパ角度</DialogLabel>
            <Field $plain>0.0 deg</Field>
          </DialogRow>
          <DialogRule />
          <DialogRow>
            <DialogLabel>操作</DialogLabel>
            <Field><CutIcon />切り取り</Field>
          </DialogRow>
          <Section>
            <SectionArrow />
            切り取るオブジェクト
          </Section>
          <DialogFooter>
            <InfoDot>i</InfoDot>
            <FootButton $w={40}>OK</FootButton>
            <FootButton $w={28} $fs={5.8} $ls={-0.4}>キャンセル</FootButton>
          </DialogFooter>
        </Dialog>
        <Callout $x={749} $y={28} $w={151} $h={224} />
      </Views>

      <Timeline>
        <Player>
          <Transport d="M1 1h2v9H1zM10 1v9L4 5.500z" />
          <Transport d="M6 1v9L1 5.500zM7 3h3v5H7z" />
          <Transport d="M2 0l8 5.500L2 11z" />
          <Transport d="M5 1v9l5-4.500zM1 3h3v5H1z" />
          <Transport d="M8 1h2v9H8zM1 1v9l6-4.500z" />
        </Player>
        <Steps>
          {stepIcons.map((icon) => (
            <Step key={icon.key}>{icon}</Step>
          ))}
          <ActiveStep><SketchIcon s={14} pen /></ActiveStep>
          <Ruler />
          <Marker />
        </Steps>
        <Spacer />
        <Gear />
      </Timeline>
    </Page>
  )
}
